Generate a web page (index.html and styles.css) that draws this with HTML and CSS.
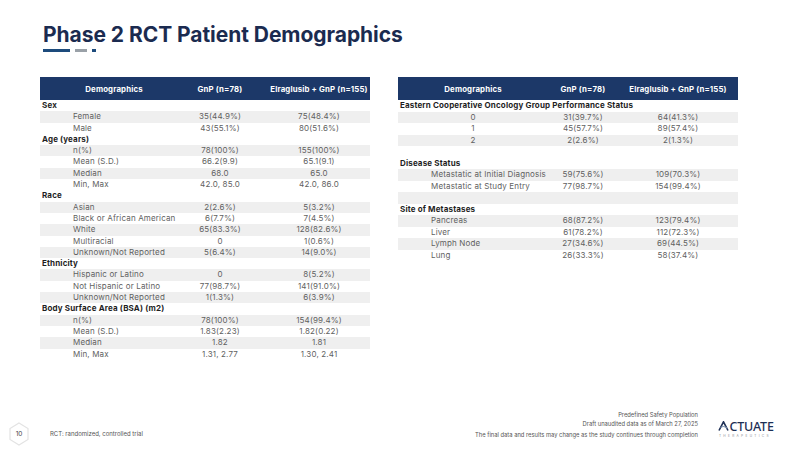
FILE: index.html
```html
<!DOCTYPE html>
<html>
<head>
<meta charset="utf-8">
<link rel="stylesheet" href="styles.css">
</head>
<body>
<div class="slide">
  <header class="head">
    <h1 class="title">Phase 2 RCT Patient Demographics</h1>
    <div class="dashes"><span class="d1"></span><span class="d2"></span><span class="d3"></span></div>
  </header>

  <main class="tables">
    <table class="demo left">
      <colgroup><col class="c1"><col class="c2"><col class="c3"></colgroup>
      <thead>
        <tr><th>Demographics</th><th>GnP (n=78)</th><th class="t3">Elraglusib + GnP (n=155)</th></tr>
      </thead>
      <tbody>
        <tr class="grp"><td colspan="3">Sex</td></tr>
        <tr class="g"><td class="ind">Female</td><td>35(44.9%)</td><td class="t3">75(48.4%)</td></tr>
        <tr><td class="ind">Male</td><td>43(55.1%)</td><td class="t3">80(51.6%)</td></tr>
        <tr class="grp"><td colspan="3">Age (years)</td></tr>
        <tr class="g"><td class="ind">n(%)</td><td>78(100%)</td><td class="t3">155(100%)</td></tr>
        <tr><td class="ind">Mean (S.D.)</td><td>66.2(9.9)</td><td class="t3">65.1(9.1)</td></tr>
        <tr class="g"><td class="ind">Median</td><td>68.0</td><td class="t3">65.0</td></tr>
        <tr><td class="ind">Min, Max</td><td>42.0, 85.0</td><td class="t3">42.0, 86.0</td></tr>
        <tr class="grp"><td colspan="3">Race</td></tr>
        <tr class="g"><td class="ind">Asian</td><td>2(2.6%)</td><td class="t3">5(3.2%)</td></tr>
        <tr><td class="ind">Black or African American</td><td>6(7.7%)</td><td class="t3">7(4.5%)</td></tr>
        <tr class="g"><td class="ind">White</td><td>65(83.3%)</td><td class="t3">128(82.6%)</td></tr>
        <tr><td class="ind">Multiracial</td><td>0</td><td class="t3">1(0.6%)</td></tr>
        <tr class="g"><td class="ind">Unknown/Not Reported</td><td>5(6.4%)</td><td class="t3">14(9.0%)</td></tr>
        <tr class="grp"><td colspan="3">Ethnicity</td></tr>
        <tr class="g"><td class="ind">Hispanic or Latino</td><td>0</td><td class="t3">8(5.2%)</td></tr>
        <tr><td class="ind">Not Hispanic or Latino</td><td>77(98.7%)</td><td class="t3">141(91.0%)</td></tr>
        <tr class="g"><td class="ind">Unknown/Not Reported</td><td>1(1.3%)</td><td class="t3">6(3.9%)</td></tr>
        <tr class="grp"><td colspan="3">Body Surface Area (BSA) (m2)</td></tr>
        <tr class="g"><td class="ind">n(%)</td><td>78(100%)</td><td class="t3">154(99.4%)</td></tr>
        <tr><td class="ind">Mean (S.D.)</td><td>1.83(2.23)</td><td class="t3">1.82(0.22)</td></tr>
        <tr class="g"><td class="ind">Median</td><td>1.82</td><td class="t3">1.81</td></tr>
        <tr><td class="ind">Min, Max</td><td>1.31, 2.77</td><td class="t3">1.30, 2.41</td></tr>
      </tbody>
    </table>

    <table class="demo right">
      <colgroup><col class="r1"><col class="r2"><col class="r3"></colgroup>
      <thead>
        <tr><th>Demographics</th><th>GnP (n=78)</th><th>Elraglusib + GnP (n=155)</th></tr>
      </thead>
      <tbody>
        <tr class="grp"><td colspan="3">Eastern Cooperative Oncology Group Performance Status</td></tr>
        <tr class="g"><td class="mid">0</td><td>31(39.7%)</td><td>64(41.3%)</td></tr>
        <tr><td class="mid">1</td><td>45(57.7%)</td><td>89(57.4%)</td></tr>
        <tr class="g"><td class="mid">2</td><td>2(2.6%)</td><td>2(1.3%)</td></tr>
        <tr><td colspan="3"></td></tr>
        <tr class="grp"><td colspan="3">Disease Status</td></tr>
        <tr class="g"><td class="ind">Metastatic at Initial Diagnosis</td><td>59(75.6%)</td><td>109(70.3%)</td></tr>
        <tr><td class="ind">Metastatic at Study Entry</td><td>77(98.7%)</td><td>154(99.4%)</td></tr>
        <tr class="g"><td colspan="3"></td></tr>
        <tr class="grp"><td colspan="3">Site of Metastases</td></tr>
        <tr class="g"><td class="ind">Pancreas</td><td>68(87.2%)</td><td>123(79.4%)</td></tr>
        <tr><td class="ind">Liver</td><td>61(78.2%)</td><td>112(72.3%)</td></tr>
        <tr class="g"><td class="ind">Lymph Node</td><td>27(34.6%)</td><td>69(44.5%)</td></tr>
        <tr><td class="ind">Lung</td><td>26(33.3%)</td><td>58(37.4%)</td></tr>
      </tbody>
    </table>
  </main>

  <footer class="foot">
    <div class="pagenum">
      <svg class="hex" width="20" height="24" viewBox="0 0 20 24"><polygon points="10,1 19,6.5 19,17.5 10,23 1,17.5 1,6.5" fill="#fff" stroke="#e3e3e3" stroke-width="1.2"/></svg>
      <span class="num">10</span>
    </div>
    <div class="note">RCT: randomized, controlled trial</div>
    <div class="disclaim">
      <div>Predefined Safety Population</div>
      <div>Draft unaudited data as of March 27, 2025</div>
      <div class="last">The final data and results may change as the study continues through completion</div>
    </div>
    <div class="logo">
      <div class="brand"><svg class="a-mark" width="11" height="10" viewBox="0 0 11 10"><path d="M1 9.5 L5.5 0.8 L10 9.5" fill="none" stroke="#1d2f55" stroke-width="1.6"/><path d="M2.6 6.6 C4.5 5.2 7 5.2 9.2 7.4" fill="none" stroke="#7f95b3" stroke-width="1.1"/></svg><span>CTUATE</span></div>
      <div class="sub">THERAPEUTICS</div>
    </div>
  </footer>
</div>
</body>
</html>
```

FILE: styles.css
```css
* { box-sizing: border-box; }
html, body { margin: 0; padding: 0; background: #fff; }
.slide {
  width: 800px;
  height: 450px;
  display: flex;
  flex-direction: column;
  font-family: Inter, "Noto Sans", sans-serif;
  color: #555;
}
.head { padding: 22px 0 0 43px; }
.title {
  margin: 0;
  font-family: Inter, sans-serif;
  font-weight: 700;
  font-size: 21px;
  line-height: 26px;
  color: #1b2b50;
  letter-spacing: -0.05px;
}
.dashes { display: flex; gap: 5px; margin-top: 1px; height: 3px; }
.dashes span { display: block; height: 3px; }
.d1 { width: 27px; background: #1d4b7c; }
.d2 { width: 12px; background: #9aa1a8; }
.d3 { width: 4px; background: #1d4b7c; }

.tables {
  display: flex;
  align-items: flex-start;
  gap: 28px;
  padding: 25px 0 0 40px;
  flex: 1;
}
.demo {
  border-collapse: collapse;
  table-layout: fixed;
  font-size: 8px;
  letter-spacing: 0.15px;
}
.demo.left { width: 330px; }
.demo.right { width: 340px; }
.c1 { width: 148px; } .c2 { width: 64px; } .c3 { width: 118px; }
.r1 { width: 150px; } .r2 { width: 70px; } .r3 { width: 120px; }
.demo th {
  background: #1c3868;
  color: #fff;
  font-weight: 700;
  height: 23px;
  padding: 0;
  text-align: center;
  font-size: 7.8px;
}
.demo td {
  height: 11.3px;
  line-height: 11.3px;
  padding: 0;
  text-align: center;
  color: #5f5f5f;
  white-space: nowrap;
}
.demo.right td { height: 11.5px; line-height: 11.5px; }
.demo .t3 { padding-left: 16px; }
.demo tr.g td { background: #efefef; }
.demo tr.grp td {
  text-align: left;
  font-weight: 700;
  color: #1f1f1f;
  padding-left: 2px;
}
.demo td.ind { text-align: left; padding-left: 33px; }
.demo td.mid { text-align: center; }

.foot {
  display: flex;
  align-items: flex-end;
  height: 60px;
  padding: 0 0 4px 9px;
}
.pagenum {
  position: relative;
  width: 20px;
  height: 24px;
}
.hex { position: absolute; left: 0; top: 0; }
.num {
  position: absolute;
  left: 0; top: 0;
  width: 20px;
  line-height: 24px;
  text-align: center;
  font-size: 6.5px;
  color: #444;
}
.note {
  font-size: 6px;
  color: #555;
  margin-left: 21px;
  margin-bottom: 9px;
}
.disclaim {
  margin-left: auto;
  text-align: right;
  font-size: 5.8px;
  line-height: 9px;
  color: #555;
  margin-bottom: 7px;
}
.disclaim .last { margin-top: 2px; }
.logo {
  margin-left: 20px;
  margin-right: 15px;
  margin-bottom: 8px;
  width: 67px;
}
.brand {
  display: flex;
  align-items: flex-end;
  font-family: "Noto Sans", sans-serif;
  font-size: 12.5px;
  line-height: 11px;
  font-weight: 500;
  color: #1d2f55;
  letter-spacing: -0.2px;
}
.a-mark { margin-right: 0.5px; margin-bottom: 1px; }
.sub {
  font-size: 3.2px;
  letter-spacing: 2.3px;
  color: #8a8f96;
  margin-top: 2px;
  padding-left: 1px;
}
```
